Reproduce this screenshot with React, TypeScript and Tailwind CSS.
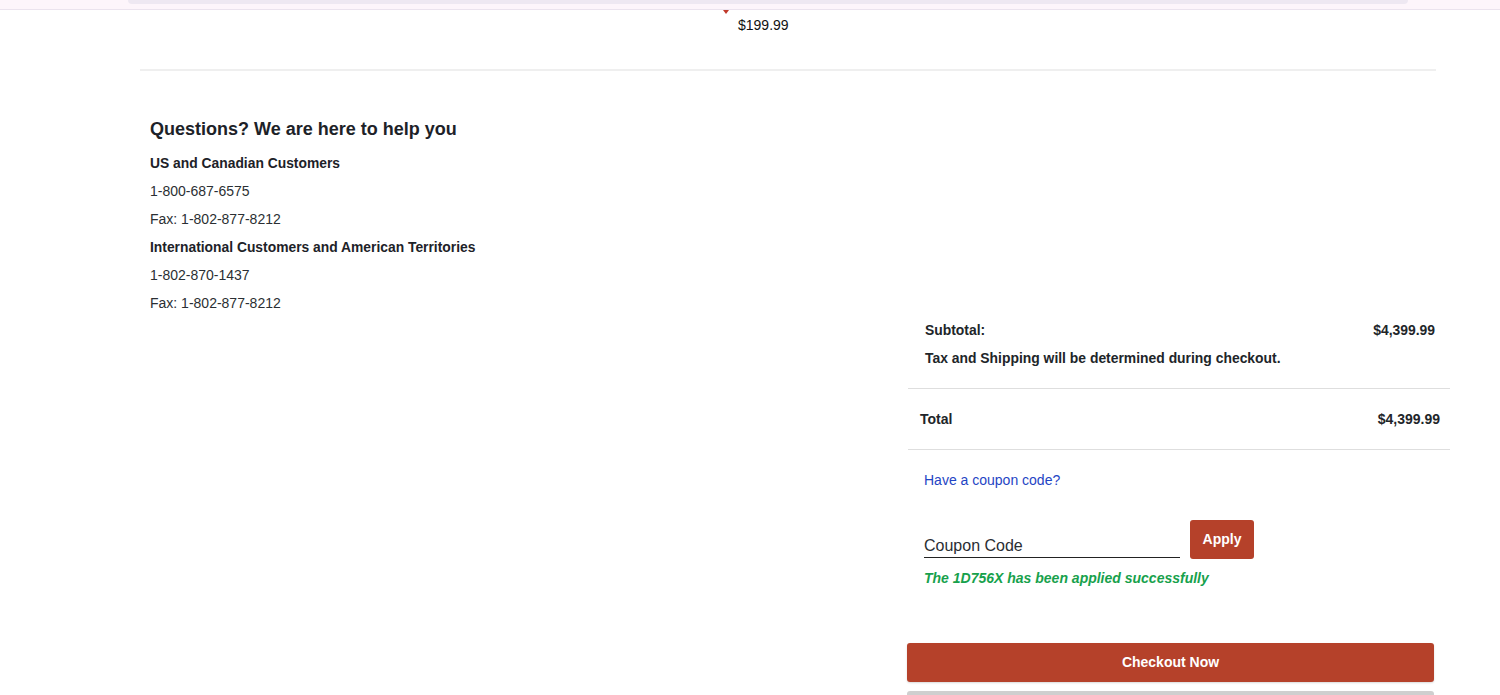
import React from 'react';

const contact = [
  { text: 'US and Canadian Customers', bold: true },
  { text: '1-800-687-6575' },
  { text: 'Fax: 1-802-877-8212' },
  { text: 'International Customers and American Territories', bold: true },
  { text: '1-802-870-1437' },
  { text: 'Fax: 1-802-877-8212' },
];

export default function App() {
  return (
    <div className="min-h-[695px] bg-white text-[#212529] font-['Liberation_Sans',Arial,sans-serif] overflow-hidden">
      {/* top strip */}
      <div className="h-[10px] bg-[#fdf5fb] border-b border-[#ebe3ee] px-[128px]">
        <div className="h-[4px] w-[1280px] rounded-b-[6px] bg-[#eee8f2]" />
      </div>

      {/* last item price */}
      <div className="relative h-[59px]">
        <div className="absolute left-[723px] top-0 w-0 h-0 border-l-[3px] border-r-[3px] border-t-[4px] border-l-transparent border-r-transparent border-t-[#c0392b]" />
        <div className="pl-[738px] pt-[6px] text-[14px] leading-[18px] text-[#111]">$199.99</div>
      </div>
      <div className="mx-[140px] w-[1296px] h-[2px] bg-[#efefef]" />

      {/* contact */}
      <div className="pl-[150px] pt-[45px]">
        <h2 className="text-[18px] leading-[27px] font-bold text-[#1d2228] mb-[6px]">Questions? We are here to help you</h2>
        {contact.map((c, i) => (
          <div
            key={i}
            className={`leading-[28px] ${c.bold ? 'font-bold text-[#1d2228] text-[13.85px]' : 'text-[#2b2f33] text-[14px]'}`}
          >
            {c.text}
          </div>
        ))}
      </div>

      {/* summary */}
      <div className="ml-[907px] w-[543px] -mt-[1px]">
        <div className="pl-[18px] pr-[15px] pb-[16px]">
          <div className="flex justify-between text-[13.9px] font-bold leading-[28px]">
            <span>Subtotal:</span>
            <span>$4,399.99</span>
          </div>
          <div className="text-[13.9px] font-bold leading-[28px]">Tax and Shipping will be determined during checkout.</div>
        </div>
        <div className="h-[1px] bg-[#dedede] ml-[1px]" />
        <div className="flex justify-between items-center h-[60px] pl-[13px] pr-[10px] text-[14px] font-bold">
          <span>Total</span>
          <span>$4,399.99</span>
        </div>
        <div className="h-[1px] bg-[#dedede] ml-[1px]" />

        <div className="pl-[17px] pt-[18px]">
          <a className="text-[14px] leading-[18px] text-[#1f45c4]">Have a coupon code?</a>
          <div className="flex items-start gap-[10px] mt-[28px]">
            <div className="w-[256px] pt-[15px] border-b border-[#222] text-[16px] leading-[22px] text-[#2a2e33]">
              Coupon Code
            </div>
            <button className="w-[64px] h-[39px] rounded-[3px] bg-[#b5412a] text-white text-[14px] font-bold">Apply</button>
          </div>
          <div className="mt-[10px] text-[14px] leading-[18px] italic font-bold text-[#17a14c]">
            The 1D756X has been applied successfully
          </div>
        </div>

        <button className="mt-[56px] w-[527px] h-[39px] rounded-[3px] bg-[#b5412a] text-white text-[14px] font-bold shadow-[0_1px_2px_rgba(0,0,0,0.15)]">
          Checkout Now
        </button>
        <div className="mt-[9px] w-[527px] h-[10px] rounded-t-[3px] bg-[#cfcfcf]" />
      </div>
    </div>
  );
}
